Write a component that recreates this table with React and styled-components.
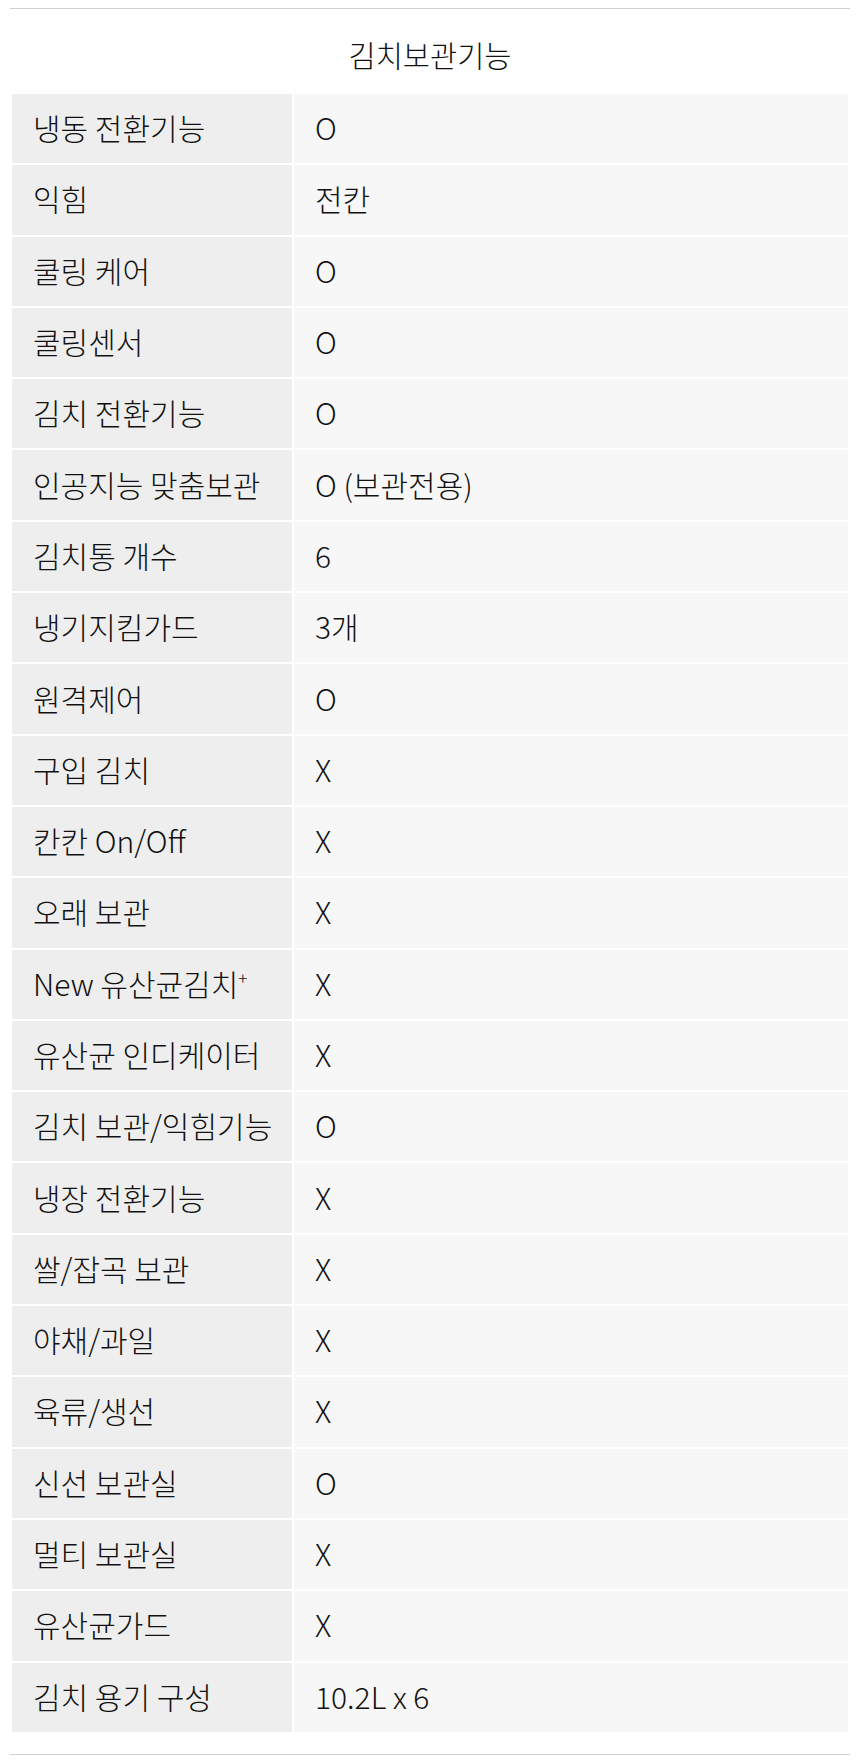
import React from 'react'
import styled, { createGlobalStyle } from 'styled-components'

const rows = [
	['냉동 전환기능', 'O'],
	['익힘', '전칸'],
	['쿨링 케어', 'O'],
	['쿨링센서', 'O'],
	['김치 전환기능', 'O'],
	['인공지능 맞춤보관', 'O (보관전용)'],
	['김치통 개수', '6'],
	['냉기지킴가드', '3개'],
	['원격제어', 'O'],
	['구입 김치', 'X'],
	['칸칸 On/Off', 'X'],
	['오래 보관', 'X'],
	['New 유산균김치', 'X', '+'],
	['유산균 인디케이터', 'X'],
	['김치 보관/익힘기능', 'O'],
	['냉장 전환기능', 'X'],
	['쌀/잡곡 보관', 'X'],
	['야채/과일', 'X'],
	['육류/생선', 'X'],
	['신선 보관실', 'O'],
	['멀티 보관실', 'X'],
	['유산균가드', 'X'],
	['김치 용기 구성', '10.2L x 6'],
]

const App = () => {
	return (
		<>
			<GlobalStyle />
			<Section>
				<Title>김치보관기능</Title>
				<SpecTable>
					<tbody>
						{rows.map(([label, value, mark], i) => (
							<tr key={i}>
								<Label>
									{label}
									{mark && <Sup>{mark}</Sup>}
								</Label>
								<Value>{value}</Value>
							</tr>
						))}
					</tbody>
				</SpecTable>
			</Section>
		</>
	)
}

export default App

const GlobalStyle = createGlobalStyle`
	body {
		margin: 0;
		background: #fff;
		font-family: "Noto Sans CJK KR Light", "Noto Sans CJK KR", "Noto Sans", sans-serif;
		color: #111;
	}
`

const Section = styled.section`
	margin: 8px 10px 0;
	border-top: 1px solid #d0d0d0;
	border-bottom: 1px solid #d0d0d0;
	padding-bottom: 20px;
	width: 840px;
`

const Title = styled.h2`
	margin: 0;
	padding: 25px 0 18px;
	line-height: 40px;
	font-size: 29.5px;
	font-weight: 300;
	text-align: center;
`

const SpecTable = styled.table`
	width: 840px;
	border-collapse: separate;
	border-spacing: 2px;
	table-layout: fixed;
`

const Cell = styled.td`
	height: 69.3px;
	padding: 0 0 3px 21px;
	font-size: 30px;
	font-weight: 300;
	line-height: 1.2;
	vertical-align: middle;
	box-sizing: border-box;
`

const Label = styled(Cell)`
	width: 280px;
	background: #eeeeee;
`

const Value = styled(Cell)`
	background: #f7f7f7;
`

const Sup = styled.sup`
	font-size: 17px;
	vertical-align: 11px;
	line-height: 0;
`
